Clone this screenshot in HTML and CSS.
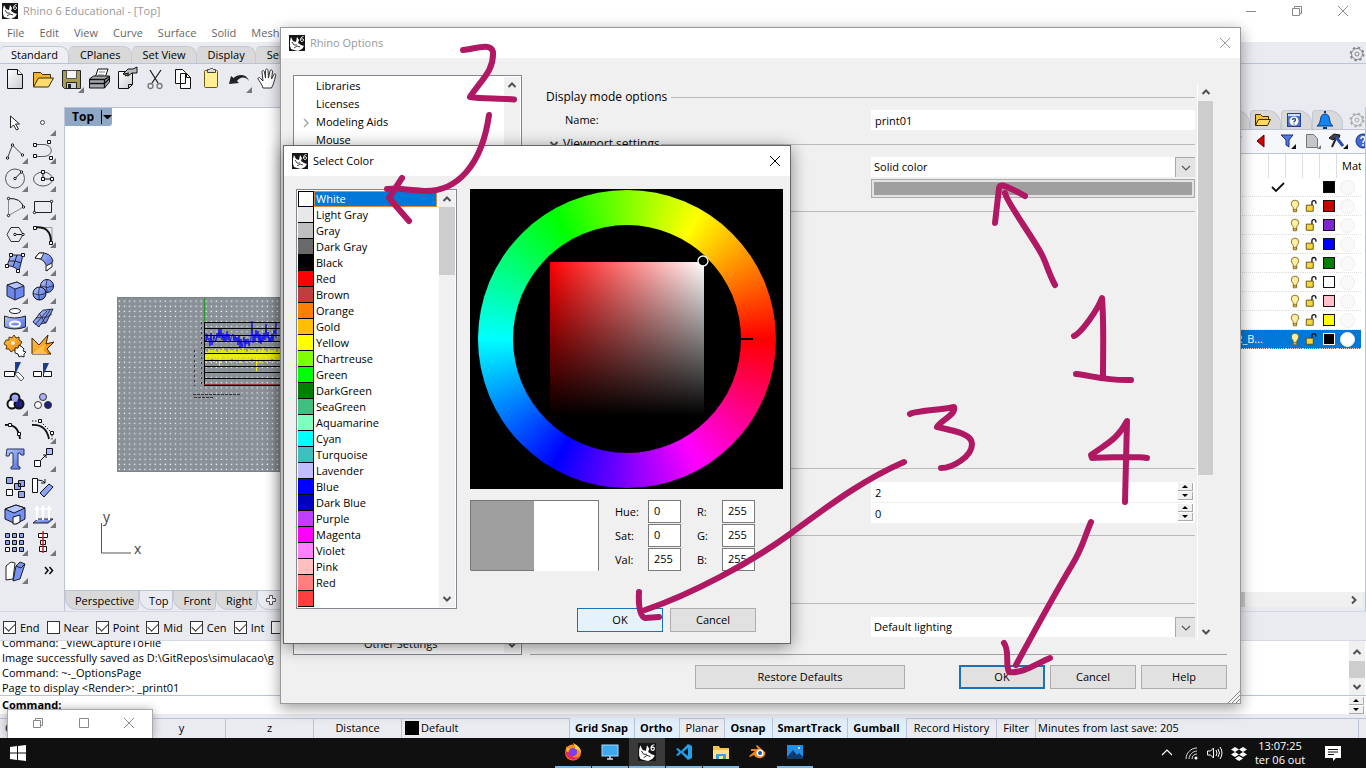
FILE: index.html
```html
<!DOCTYPE html>
<html lang="en">
<head>
<meta charset="utf-8">
<title>Rhino 6 Educational - [Top]</title>
<link rel="stylesheet" href="styles.css">
</head>
<body>
<svg class="defs" aria-hidden="true">
  <defs>
    <linearGradient id="bl" x1="0" y1="0" x2="1" y2="1"><stop offset="0" stop-color="#b9c8ff"/><stop offset="1" stop-color="#4a68d8"/></linearGradient>
    <linearGradient id="or" x1="0" y1="0" x2="1" y2="1"><stop offset="0" stop-color="#ffc64a"/><stop offset="1" stop-color="#ef8200"/></linearGradient>
    <linearGradient id="gy" x1="0" y1="0" x2="1" y2="1"><stop offset="0" stop-color="#fff"/><stop offset="1" stop-color="#c9cbd0"/></linearGradient>
    <pattern id="dots" x="55" y="193" width="5.1" height="5.1" patternUnits="userSpaceOnUse"><rect width="5.1" height="5.1" fill="#8f959c"/><path d="M2.500 0V5.100M0 2.500H5.100" stroke="#80868d" stroke-width=".6"/><rect x="4" y="4" width="1.100" height="1.100" fill="#fff"/></pattern>
    <path id="yz" d="M0 0l1 12 1-10 1 8 1-11 1 13 1-12 1 9 1-9 1 12 1-13 1 11 1-8 1 8 1-11 1 14 1-13 1 10 1-12 1 12 1-10" fill="none" stroke="#f5f500"/>
    <symbol id="rhino" viewBox="0 0 16 16"><rect width="16" height="16" fill="#161616"/><path d="M1 6l1-4 2 4 3 1 1-5 2 3-1 3 3 2 3 1-2 3-4 2-4-1-3-1-1-3z" fill="#fff"/><path d="M3 7l2 3 3 0M5 13l3-2 3 1" stroke="#161616" fill="none" stroke-width=".8"/><path d="M14.500 1.500c-2 .2-3 1.500-3 3.200 0 2.500 3 2.200 3 .3 0-1.700-2.200-1.700-2.800-.3" fill="none" stroke="#fff"/></symbol>
    <symbol id="tri" viewBox="0 0 28 28"><path d="M27 22v6h-6z" fill="#777"/></symbol>
    <symbol id="up" viewBox="0 0 16 16"><path d="M4.500 10L8 6.500l3.500 3.500" fill="none" stroke="#505050" stroke-width="2"/></symbol>
    <symbol id="down" viewBox="0 0 16 16"><path d="M4.500 6L8 9.500 11.500 6" fill="none" stroke="#505050" stroke-width="2"/></symbol>
    <symbol id="thin" viewBox="0 0 16 16"><path d="M4 6l4 4 4-4" fill="none" stroke="#555" stroke-width="1.200"/></symbol>
    <symbol id="close" viewBox="0 0 12 12"><path d="M1 1l10 10M11 1L1 11" fill="none" stroke="currentColor"/></symbol>
    <symbol id="restore" viewBox="0 0 12 12"><path d="M1.500 3.500h7v7h-7zM3.500 3.500v-2h7v7h-2" fill="none" stroke="currentColor"/></symbol>
    <symbol id="gear" viewBox="0 0 16 16"><circle cx="8" cy="8" r="5.500" fill="none" stroke="currentColor" stroke-width="1"/><circle cx="8" cy="8" r="6.500" fill="none" stroke="currentColor" stroke-width="1.800" stroke-dasharray="2.500 2.600"/><circle cx="8" cy="8" r="2" fill="none" stroke="currentColor"/></symbol>
    <symbol id="bulb" viewBox="0 0 12 16"><path d="M4 11C4 9 1.500 8 1.500 5.500a4.500 4.500 0 0 1 9 0C10.500 8 8 9 8 11v3H4z" fill="#fff0a0" stroke="#7a5a10"/><path d="M4 12h4v3H4z" fill="#d4b050" stroke="#7a5a10" stroke-width=".8"/></symbol>
    <symbol id="lock" viewBox="0 0 14 16"><path d="M7.500 7V4a2 2 0 0 1 4.500 0v1.500" fill="none" stroke="#111" stroke-width="1.500"/><path d="M1 7h8v7H1z" fill="#f5d53d" stroke="#5a4508"/></symbol>
    <symbol id="folder" viewBox="0 0 22 18"><path d="M3.500 14.500v-11h5l2 2h6v3" fill="#f5c03a" stroke="#3c2c00"/><path d="M3.500 14.500l3-6h12l-3 6z" fill="#ffd864" stroke="#3c2c00"/></symbol>
  </defs>
</svg>

<div class="app">
  <header class="titlebar">
    <svg class="i16"><use href="#rhino"/></svg>
    <h1>Rhino 6 Educational - [Top]</h1>
    <div class="winctl">
      <button aria-label="Minimize"><svg class="i12" viewBox="0 0 12 12"><path d="M1 6.500h10" stroke="currentColor"/></svg></button>
      <button aria-label="Restore"><svg class="i12"><use href="#restore"/></svg></button>
      <button aria-label="Close"><svg class="i12"><use href="#close"/></svg></button>
    </div>
  </header>
  <nav class="menu"><button>File</button><button>Edit</button><button>View</button><button>Curve</button><button>Surface</button><button>Solid</button><button>Mesh</button></nav>
  <div class="tabbar">
    <div class="tabs"><button class="tab on">Standard</button><button class="tab">CPlanes</button><button class="tab">Set View</button><button class="tab">Display</button><button class="tab">Select</button></div>
    <svg class="i16 gear"><use href="#gear"/></svg>
  </div>
  <div class="toolbar">
    <button aria-label="New"><svg viewBox="0 0 28 28"><path d="M6.500 4.500h10l5 5v14h-15z" fill="url(#gy)" stroke="#111"/><path d="M16.500 4.500v5h5" fill="#fff" stroke="#111"/></svg></button>
    <button aria-label="Open"><svg viewBox="0 0 28 28"><path d="M4.500 21.500v-14h7l2 2h8v4" fill="#f5b52a" stroke="#3c2c00"/><path d="M4.500 22l5-9h15l-5 9z" fill="#ffdc70" stroke="#3c2c00"/></svg></button>
    <button aria-label="Save"><svg viewBox="0 0 28 28"><path d="M5.500 5.500h18v18h-16l-2-2z" fill="#a99c52" stroke="#222"/><path d="M9.500 5.500h10v8h-10z" fill="#f2f4f6" stroke="#555"/><path d="M9.500 17.500h10v6h-10z" fill="#ccd2d6" stroke="#222"/><path d="M11 19h3v4h-3z" fill="#222"/><use href="#tri"/></svg></button>
    <button aria-label="Print"><svg viewBox="0 0 28 28"><path d="M10 13l3-9h10l-3 9z" fill="#fff" stroke="#111"/><path d="M14 7h6M13 10h6" stroke="#777"/><path d="M4.500 14l4-3h16v6l-5 6h-15z" fill="#a5a9ae" stroke="#111"/><path d="M4.500 14.500h15l5-3M4.500 18.500h15l5-5M19.500 14.500V23" fill="none" stroke="#111" stroke-width="1.300"/></svg></button>
    <button aria-label="Properties"><svg viewBox="0 0 28 28"><path d="M5.500 6.500h14v13l-4 4h-10z" fill="url(#gy)" stroke="#111"/><path d="M15.500 23.500v-4h4" fill="none" stroke="#111"/><path d="M10 9l5-5h5l4-2v6h-5l-4 3z" fill="#bbb" stroke="#111"/><path d="M11 9l5-1M12 11l4-2" stroke="#111"/></svg></button>
    <button aria-label="Cut"><svg viewBox="0 0 28 28"><path d="M9 5l8 13M20 5l-9 13" stroke="#222" stroke-width="1.300"/><circle cx="9.500" cy="21" r="2.500" fill="none" stroke="#777" stroke-width="1.300"/><circle cx="18.500" cy="21" r="2.500" fill="none" stroke="#777" stroke-width="1.300"/></svg></button>
    <button aria-label="Copy"><svg viewBox="0 0 28 28"><path d="M6.500 4.500h7l3 3v11h-10zM11.500 8.500h6l4 4v11h-10z" fill="#fff" stroke="#111"/><path d="M17.500 8.500v4h4" fill="none" stroke="#111"/></svg></button>
    <button aria-label="Paste"><svg viewBox="0 0 28 28"><rect x="7.500" y="5.500" width="13" height="17" rx="1" fill="#ffef94" stroke="#70560e"/><path d="M10.500 7.500v-3h2l1-1h2l1 1h2v3z" fill="#ddd" stroke="#444"/></svg></button>
    <button aria-label="Undo"><svg viewBox="0 0 28 28"><path d="M4 19l2-8 2.500 2C14 8 22 9 24 16c-4-5-9-4-12 0l2 2z" fill="#222"/><use href="#tri"/></svg></button>
    <button aria-label="Pan"><svg viewBox="0 0 28 28"><path d="M10 23c-1-4-4-7-5-9 0-2 2-2 3 0l2 2-1-9c0-2 2-2 2.500 0l1 6V5.500c0-2 2.500-2 2.500 0L15.500 13 17 6c.5-2 3-1 2.500 1l-1 7 2-4c1-2 3-1 2 1-1 5-2 8-4 12z" fill="#fff" stroke="#333"/></svg></button>
  </div>

  <main class="work">
    <div class="tools">
      <button aria-label="Select"><svg viewBox="0 0 28 28"><path d="M9.500 8v12l3-3 3 5 2-1-3-5h4z" fill="#fff" stroke="#222"/></svg></button>
      <button aria-label="Point"><svg viewBox="0 0 28 28"><circle cx="13.500" cy="14.500" r="2" fill="#fff" stroke="#444"/><use href="#tri"/></svg></button>
      <button aria-label="Polyline"><svg viewBox="0 0 28 28"><path d="M6.500 22l5-13 10 10" fill="none" stroke="#444"/><g fill="#fff" stroke="#111"><circle cx="6.500" cy="22" r="1.200"/><circle cx="11.500" cy="9" r="1.200"/><circle cx="21.500" cy="19" r="1.200"/></g><use href="#tri"/></svg></button>
      <button aria-label="Curve"><svg viewBox="0 0 28 28"><path d="M6 8.500h8c11 0 11 12 0 12H6" fill="none" stroke="#555"/><path d="M4.500 7.500h3v3h-3zM18.500 4.500h3v3h-3zM4.500 18.500h3v3h-3zM20.500 20.500h3v3h-3z" fill="#fff" stroke="#111"/><use href="#tri"/></svg></button>
      <button aria-label="Circle"><svg viewBox="0 0 28 28"><circle cx="14" cy="14.500" r="9.500" fill="none" stroke="#555"/><path d="M14 14.500L20.500 8" stroke="#111"/><g fill="#fff" stroke="#111"><circle cx="14" cy="14.500" r="1.200"/><circle cx="20.500" cy="8" r="1.200"/></g><use href="#tri"/></svg></button>
      <button aria-label="Ellipse"><svg viewBox="0 0 28 28"><ellipse cx="14" cy="15" rx="9.500" ry="7" fill="none" stroke="#555"/><path d="M14 8v7h9" fill="none" stroke="#111"/><path d="M12.500 6.500h3v3h-3zM12.500 13.500h3v3h-3zM21.500 13.500h3v3h-3z" fill="#fff" stroke="#111"/><use href="#tri"/></svg></button>
      <button aria-label="Arc"><svg viewBox="0 0 28 28"><path d="M7.500 6.500v17L22.500 15" fill="none" stroke="#888"/><path d="M7.500 6.500Q20 6 22.500 15" fill="none" stroke="#111"/><g fill="#fff" stroke="#111"><circle cx="7.500" cy="6.500" r="1.200"/><circle cx="7.500" cy="23.500" r="1.200"/><circle cx="22.500" cy="15" r="1.200"/></g><use href="#tri"/></svg></button>
      <button aria-label="Rectangle"><svg viewBox="0 0 28 28"><path d="M5.500 9.500h17v11h-17z" fill="none" stroke="#222"/><g fill="#fff" stroke="#111"><circle cx="22.500" cy="9.500" r="1.200"/><circle cx="5.500" cy="20.500" r="1.200"/></g><use href="#tri"/></svg></button>
      <button aria-label="Polygon"><svg viewBox="0 0 28 28"><path d="M6 14.500l4-7h8l4 7-4 7h-8z" fill="none" stroke="#333"/><path d="M14 14.500h8" stroke="#111"/><g fill="#fff" stroke="#111"><circle cx="14" cy="14.500" r="1.200"/><circle cx="22" cy="14.500" r="1.200"/></g><use href="#tri"/></svg></button>
      <button aria-label="Fillet"><svg viewBox="0 0 28 28"><path d="M8 7.500h15v13" fill="none" stroke="#999"/><path d="M6 7.500Q22 6 22 22" fill="none" stroke="#111" stroke-width="2"/><path d="M4.500 6.500h3v3h-3zM20.500 21.500h3v3h-3z" fill="#fff" stroke="#111"/><use href="#tri"/></svg></button>
      <button aria-label="Surface"><svg viewBox="0 0 28 28"><path d="M10 7h12l-4 16q-6-6-12-5z" fill="url(#bl)" stroke="#223"/><path d="M16 7l-4 12M8 13q6-1 12 2" fill="none" stroke="#223"/><path d="M8.500 5.500h3v3h-3zM20.500 5.500h3v3h-3zM4.500 16.500h3v3h-3zM15.500 21.500h3v3h-3z" fill="#fff" stroke="#111"/><use href="#tri"/></svg></button>
      <button aria-label="Sweep"><svg viewBox="0 0 28 28"><path d="M6 10l4-5q12-1 14 8l-6 10q0-13-12-13z" fill="url(#bl)" stroke="#222"/><path d="M6 10l4-5h5l-3 6zM17 18l6-3v4l-6 4z" fill="#fff" stroke="#222"/><use href="#tri"/></svg></button>
      <button aria-label="Box"><svg viewBox="0 0 28 28"><path d="M6 9l10-3 7 4v10l-9 4-8-4z" fill="#6b87ec" stroke="#223"/><path d="M6 9l8 4 9-3-7-4z" fill="#b5c4ff" stroke="#223"/><path d="M14 13v11" stroke="#223"/><use href="#tri"/></svg></button>
      <button aria-label="Spheres"><svg viewBox="0 0 28 28"><g fill="url(#bl)" stroke="#112"><circle cx="18" cy="10" r="6.500"/><circle cx="10.500" cy="17.500" r="6.500"/></g><path d="M12 10q6 3 12 0M18 4q-2 6 0 12M4 17.500q6 3 13 0M10.500 11q-2 6 0 13" fill="none" stroke="#112" stroke-width=".7"/><use href="#tri"/></svg></button>
      <button aria-label="Project"><svg viewBox="0 0 28 28"><ellipse cx="14" cy="7" rx="5.500" ry="2.500" fill="#fff" stroke="#222"/><path d="M3.500 12q10 4 21 0v11q-11 4-21 0z" fill="url(#bl)" stroke="#222"/><ellipse cx="14" cy="20" rx="5" ry="2.500" fill="none" stroke="#fff" stroke-width="2"/><use href="#tri"/></svg></button>
      <button aria-label="Mesh"><svg viewBox="0 0 28 28"><path d="M4 18l7-9q4-4 5-3l8-1-7 14q-6 0-7 4z" fill="url(#bl)" stroke="#223"/><path d="M7 14l11-1 5-3M6 21l12-14M12 20l9-14M10 9l3 5 3 5" fill="none" stroke="#223" stroke-width=".8"/><use href="#tri"/></svg></button>
      <button aria-label="Join"><svg viewBox="0 0 28 28"><path d="M5 8h3V5l3 1 2-3 2 3 3-1v3l3 2-2 3 1 3h-3l-1 3-3-1-3 2-2-3H5l1-3-3-2z" fill="url(#or)" stroke="#5c3500"/><circle cx="12" cy="11" r="2" fill="#e8eaef"/><path d="M14 16l3 0 1-3 3 2 2 2-1 2 3 1-2 2 0 3-3-1-2 1-1-3-3-1z" fill="#fff" stroke="#222"/></svg></button>
      <button aria-label="Explode"><svg viewBox="0 0 28 28"><path d="M3 6l7 7 9-10-2 9 8-2-7 7 4 5H3z" fill="url(#or)" stroke="#3c2200"/><path d="M3 22l7-6 7-4-3 6 5 4z" fill="#ffc04a"/></svg></button>
      <button aria-label="Trim"><svg viewBox="0 0 28 28"><path d="M3.500 11.500h10v5h-10z" fill="#fff" stroke="#111"/><path d="M14 14l3-2 6 6-3 3z" fill="#fff" stroke="#555"/><path d="M14 2h6l-6 13z" fill="#1f3d8f"/></svg></button>
      <button aria-label="Split"><svg viewBox="0 0 28 28"><path d="M4.500 11.500h8v5h-8zM14.500 11.500h8v5h-8z" fill="#fff" stroke="#111"/><path d="M14 3h6l-6 13z" fill="#1f3d8f"/></svg></button>
      <button aria-label="Group"><svg viewBox="0 0 28 28"><g stroke="#111" stroke-width="2"><circle cx="14" cy="10" r="4.500" fill="#aab0f5"/><circle cx="11" cy="16" r="4.500" fill="#fff"/><circle cx="18" cy="16" r="4.500" fill="#202080"/></g><circle cx="14" cy="11" r="3" fill="#9aa3ee"/><use href="#tri"/></svg></button>
      <button aria-label="Ungroup"><svg viewBox="0 0 28 28"><g stroke="#333"><circle cx="14" cy="9" r="3.500" fill="#aab0f5"/><circle cx="9" cy="17" r="3.500" fill="#fff"/><circle cx="19" cy="17" r="3.500" fill="#202080"/></g></svg></button>
      <button aria-label="Edit curve"><svg viewBox="0 0 28 28"><path d="M4 9q13-2 15 14" fill="none" stroke="#111" stroke-width="1.800"/><path d="M7.500 7.500h3v3h-3zM16.500 16.500h3v3h-3z" fill="#fff" stroke="#111"/></svg></button>
      <button aria-label="Control points"><svg viewBox="0 0 28 28"><path d="M3 9q14-1 17 14" fill="none" stroke="#111" stroke-width="1.800"/><path d="M3 5h8l12 12v8" fill="none" stroke="#111" stroke-dasharray="1.500 1.500"/><path d="M9.500 3.500h3v3h-3zM21.500 15.500h3v3h-3z" fill="#fff" stroke="#111"/><use href="#tri"/></svg></button>
      <button aria-label="Annotate"><svg viewBox="0 0 28 28"><path d="M6 5h17v6h-3l-1-2h-2v13l2 1v2h-9v-2l2-1V9H9l-1 3H5z" fill="url(#bl)" stroke="#26355f"/></svg></button>
      <button aria-label="Move"><svg viewBox="0 0 28 28"><path d="M17.500 4.500h6v6h-6z" fill="#aebcff" stroke="#111"/><path d="M5.500 16.500h6v6h-6z" fill="#fff" stroke="#111"/><path d="M12 16l5-5m-3 0h3v3" fill="none" stroke="#111"/><use href="#tri"/></svg></button>
      <button aria-label="Array"><svg viewBox="0 0 28 28"><path d="M5.500 5.500h6v6h-6zM17.500 8.500h6v6h-6zM13.500 11.500h6v6h-6zM17.500 19.500h6v6h-6z" fill="#8ea3f8" stroke="#111"/><path d="M5.500 17.500h6v6h-6z" fill="#fff" stroke="#111"/></svg></button>
      <button aria-label="Rotate"><svg viewBox="0 0 28 28"><path d="M3.500 6.500h5v14h-5z" fill="#fff" stroke="#111"/><path d="M11 21l9-9 4 3-9 10z" fill="#8ea3f8" stroke="#111"/><path d="M9 8q5 0 7 3m0-4v4h-4" fill="none" stroke="#111"/></svg></button>
      <button aria-label="Cage"><svg viewBox="0 0 28 28"><path d="M4 9l11-4 9 3v11l-9 5-11-5z" fill="#7793f2" stroke="#112"/><path d="M4 9l9 4 11-5-9-3z" fill="#b9c7ff" stroke="#112"/><path d="M12 24v-7l7-2v7l-4 2z" fill="#fff" stroke="#112"/><use href="#tri"/></svg></button>
      <button aria-label="Extrude"><svg viewBox="0 0 28 28"><path d="M4 23l5-4h15l-5 4z" fill="url(#bl)" stroke="#223"/><path d="M8 20V9M14 20V9M20 20V9" stroke="#fff" stroke-width="2"/><path d="M5 10l3-5 3 5zM11 10l3-5 3 5zM17 10l3-5 3 5z" fill="#fff"/><use href="#tri"/></svg></button>
      <button aria-label="Grid array"><svg viewBox="0 0 28 28"><path d="M4.500 5.500h4v4h-4zM11.500 5.500h4v4h-4zM18.500 5.500h4v4h-4zM4.500 12.500h4v4h-4zM11.500 12.500h4v4h-4zM18.500 12.500h4v4h-4zM11.500 19.500h4v4h-4zM18.500 19.500h4v4h-4z" fill="#8ea3f8" stroke="#111"/><path d="M4.500 19.500h4v4h-4z" fill="#fff" stroke="#111"/><use href="#tri"/></svg></button>
      <button aria-label="Align"><svg viewBox="0 0 28 28"><path d="M9.500 5.500h9v4h-9zM11.500 12.500h5v4h-5zM10.500 18.500h7v5h-7z" fill="#fff" stroke="#111"/><path d="M14 3v22" stroke="#c22" stroke-width="1.500"/><use href="#tri"/></svg></button>
      <button aria-label="Bend"><svg viewBox="0 0 28 28"><path d="M5 10l5-4 4 1-2 16-7 1z" fill="#fff" stroke="#222"/><path d="M15 10l4-4 5 2-5 15-7 2z" fill="#7793f2" stroke="#222"/><path d="M15 10l5 2 4-4" fill="none" stroke="#222"/><use href="#tri"/></svg></button>
      <button aria-label="More"><svg viewBox="0 0 28 28"><path d="M16 11l3 3.500-3 3.500M20.500 11l3 3.500-3 3.500" fill="none" stroke="#111" stroke-width="1.600"/></svg></button>
    </div>

    <section class="view">
      <div class="canvas">
        <div class="vtitle"><b>Top</b><button aria-label="Viewport menu"></button></div>
        <svg class="model" viewBox="0 2 400 466">
          <rect x="52.500" y="173.500" width="347" height="174" fill="url(#dots)" stroke="#7d838a"/>
          <path d="M139.500 174v24" stroke="#2a9a2a" stroke-width="1.500"/>
          <path d="M141 209v8l1-7 1 6 1-2 1 8 1-13 1 12 1-4 1-5 2 6 1-9 1 5 1-9 1 9 1-9 1 11 1-7 1 9 1-8 1 7 1-10 1 9 1-6 1 8 1-4 2-4 1 7 1-5 1 5 1-4 1 8 1-10 1 12 1-8 1 9 1-5 1-6 1 10 1-8 1 5 1-5 1 7 1-4 1-4 1-17 1 22 1-9 1 7 1-11 1 8 1-7 1 12 1-9 1 10 1-8 1 5 1-8 1 7 1-16 1 14 1-6 1 10 1-5 1 5 1-8 1 8 1-12 1 4 1-11v15" fill="none" stroke="#1515f0"/>
          <use href="#yz" x="140" y="226"/><use href="#yz" x="160" y="226"/><use href="#yz" x="180" y="226"/><use href="#yz" x="200" y="226"/>
          <path d="M191.500 230v17M154.500 230v12" stroke="#f5f500"/>
          <path d="M139 198.500h260M139 204.500h260M139 211.500h260M139 217.500h260M139 223.500h260M139 229.500h260M139 236.500h260M139 242.500h260M139 248.500h260M139 254.500h260M139.500 198v64" stroke="#000" fill="none"/>
          <path d="M139 260.500h260" stroke="#933"/><path d="M139 261.500h260" stroke="#000"/>
          <path d="M136.500 198v64M129.500 226v36" stroke="#333" stroke-dasharray="2 3"/><path d="M128 270.500h48M129 273.500h20" stroke="#333" stroke-dasharray="3 1"/>
          <path d="M36.500 399v30H66" fill="none" stroke="#555"/>
          <text x="38" y="398">y</text><text x="69" y="430">x</text>
        </svg>
      </div>
      <div class="vtabs"><button>Perspective</button><button class="on">Top</button><button>Front</button><button>Right</button><button class="on plus" aria-label="New viewport"><svg class="i12" viewBox="0 0 12 12"><path d="M4.500 1.500h3v3h3v3h-3v3h-3v-3h-3v-3h3z" fill="#fff" stroke="#555"/></svg></button></div>
    </section>

    <aside class="panel">
      <div class="ptabs">
        <button aria-label="Layers"></button>
        <button aria-label="Libraries"><svg viewBox="0 0 22 18"><use href="#folder"/></svg></button>
        <button aria-label="Help"><svg viewBox="0 0 22 18"><rect x="4.500" y="2.500" width="13" height="13" fill="#4f72cf" stroke="#274087"/><path d="M5 4h12" stroke="#cfe0ff" stroke-width="2"/><circle cx="11" cy="10" r="4.500" fill="#fff"/><path d="M9.500 9c0-2 3-2 3 0 0 1-1.500 1-1.500 2.500M11 12.500v1" fill="none" stroke="#274087" stroke-width="1.300"/></svg></button>
        <button aria-label="Notifications"><svg viewBox="0 0 22 18"><path d="M3 15c3-2 3-5 4-9 1-4 7-4 8 0 1 4 1 7 4 9z" fill="#1583f0" stroke="#073b80"/><path d="M9 16h4v2H9zM10 0h2v2h-2z" fill="#073b80"/></svg></button>
        <svg class="i16 pgear"><use href="#gear"/></svg>
      </div>
      <div class="pbar">
        <svg viewBox="0 0 22 22"><path d="M2 6h14l-5 9z" fill="#999"/></svg>
        <svg viewBox="0 0 22 22"><path d="M6 11l7-6v12z" fill="#d40000" stroke="#500"/></svg>
        <svg viewBox="0 0 22 22"><path d="M5 5h12l-4 5v7l-3-2v-5z" fill="#5578e0" stroke="#1c3174"/><path d="M20 14v5h-5z" fill="#111"/></svg>
        <svg viewBox="0 0 22 22"><path d="M5.500 4.500h7l4 4v9h-11z" fill="#c4c6ca" stroke="#777"/><path d="M20 15v4h-4z" fill="#777"/></svg>
        <svg viewBox="0 0 22 22"><path d="M3 8l5-4 6 1-1 3-3-1-3 3z" fill="#444" stroke="#111"/><path d="M10 8l-4 9" stroke="#222" stroke-width="2"/><path d="M10 7l7 9" stroke="#2b4db5" stroke-width="3"/><path d="M22 14v5h-5z" fill="#111"/></svg>
        <svg viewBox="0 0 22 22"><circle cx="12" cy="11" r="7" fill="#3f68d8" stroke="#1c3174"/><path d="M10 9c0-3 4-3 4 0 0 2-2 1-2 4M12 14v2" fill="none" stroke="#fff" stroke-width="1.500"/></svg>
      </div>
      <div class="layers">
        <table>
          <thead><tr><th class="nm"></th><th></th><th></th><th></th><th></th><th class="mat">Mat</th></tr></thead>
          <tbody>
            <tr><td class="nm"></td><td><svg class="ck" viewBox="0 0 14 12"><path d="M1 6l4 4 8-8" fill="none" stroke="#111" stroke-width="1.800"/></svg></td><td></td><td></td><td><i class="sw k"></i></td><td><i class="mt"></i></td></tr>
            <tr><td class="nm"></td><td></td><td><svg class="bu"><use href="#bulb"/></svg></td><td><svg class="lo"><use href="#lock"/></svg></td><td><i class="sw r"></i></td><td><i class="mt"></i></td></tr>
            <tr><td class="nm"></td><td></td><td><svg class="bu"><use href="#bulb"/></svg></td><td><svg class="lo"><use href="#lock"/></svg></td><td><i class="sw p"></i></td><td><i class="mt"></i></td></tr>
            <tr><td class="nm"></td><td></td><td><svg class="bu"><use href="#bulb"/></svg></td><td><svg class="lo"><use href="#lock"/></svg></td><td><i class="sw b"></i></td><td><i class="mt"></i></td></tr>
            <tr><td class="nm"></td><td></td><td><svg class="bu"><use href="#bulb"/></svg></td><td><svg class="lo"><use href="#lock"/></svg></td><td><i class="sw g"></i></td><td><i class="mt"></i></td></tr>
            <tr><td class="nm"></td><td></td><td><svg class="bu"><use href="#bulb"/></svg></td><td><svg class="lo"><use href="#lock"/></svg></td><td><i class="sw w"></i></td><td><i class="mt"></i></td></tr>
            <tr><td class="nm"></td><td></td><td><svg class="bu"><use href="#bulb"/></svg></td><td><svg class="lo"><use href="#lock"/></svg></td><td><i class="sw n"></i></td><td><i class="mt"></i></td></tr>
            <tr><td class="nm"></td><td></td><td><svg class="bu"><use href="#bulb"/></svg></td><td><svg class="lo"><use href="#lock"/></svg></td><td><i class="sw y"></i></td><td><i class="mt"></i></td></tr>
            <tr class="sel"><td class="nm">R_B...</td><td></td><td><svg class="bu"><use href="#bulb"/></svg></td><td><svg class="lo"><use href="#lock"/></svg></td><td><i class="sw k"></i></td><td><i class="mt"></i></td></tr>
          </tbody>
        </table>
      </div>
      <div class="hscroll"><i></i><svg class="i16" viewBox="0 0 16 16"><path d="M6 4.500L9.500 8 6 11.500" fill="none" stroke="#505050" stroke-width="2"/></svg></div>
    </aside>
  </main>

  <div class="osnap">
    <label><input type="checkbox" checked>End</label><label><input type="checkbox">Near</label><label><input type="checkbox" checked>Point</label><label><input type="checkbox" checked>Mid</label><label><input type="checkbox" checked>Cen</label><label><input type="checkbox" checked>Int</label><label><input type="checkbox">Perp</label>
  </div>
  <div class="history">
    <div class="lines"><p>Command: _ViewCaptureToFile</p><p>Image successfully saved as D:\GitRepos\simulacao\g</p><p>Command: ~-_OptionsPage</p><p>Page to display &lt;Render&gt;: _print01</p></div>
    <div class="hbar"><svg class="i16"><use href="#up"/></svg><i></i><svg class="i16"><use href="#down"/></svg></div>
  </div>
  <div class="prompt"><label for="cmd">Command:</label><input id="cmd" type="text"><span class="spin"><button aria-label="Previous"></button><button aria-label="Next"></button></span></div>
  <div class="status">
    <span class="c1">CPlane</span><span class="c2">y</span><span class="c2">z</span><span class="c2">Distance</span><span class="c3"><i></i>Default</span>
    <button class="on">Grid Snap</button><button class="on">Ortho</button><button>Planar</button><button class="on">Osnap</button><button class="on">SmartTrack</button><button class="on">Gumball</button><button class="wide">Record History</button><button>Filter</button><span class="c4">Minutes from last save: 205</span>
  </div>
  <footer class="taskbar">
    <button class="start" aria-label="Start"><svg class="i16" viewBox="0 0 16 16"><path d="M0 2l7-1v6.500H0zM8 1l8-1v7.500H8zM0 8.500h7V15l-7-1zM8 8.500h8V16l-8-1z" fill="#fff"/></svg></button>
    <div class="apps">
      <button aria-label="Firefox"><svg viewBox="0 0 18 18"><circle cx="9" cy="9.500" r="8" fill="#ff8a1c"/><path d="M1 8c1 9 10 12 15 5-4 3-9 1-8-3z" fill="#e8265e"/><circle cx="9" cy="9" r="4" fill="#7542e5"/><path d="M9 0c4 2 8 5 8 10-2-4-4-4-6-4C12 3 10 2 9 0z" fill="#ffd93b"/><path d="M2 3c1 2 3 2 4 3-2 1-2 3-3 3z" fill="#ffb52e"/></svg></button>
      <button aria-label="Remote"><svg viewBox="0 0 18 18"><rect x="1" y="2" width="16" height="11" fill="#3da9ee" stroke="#a6d9ff"/><path d="M6 16h6M9 13v3" stroke="#cde" stroke-width="1.500"/></svg></button>
      <button class="on" aria-label="Rhino"><svg><use href="#rhino"/></svg></button>
      <button aria-label="Code"><svg viewBox="0 0 18 18"><path d="M13 1l4 2v12l-4 2-7-7-3 3-2-1 3-3-3-3 2-1 3 3z" fill="#23a0ea"/><path d="M13 5v8L8 9z" fill="#101010"/></svg></button>
      <button aria-label="Explorer"><svg viewBox="0 0 18 18"><path d="M1 3h6l1 2h9v11H1z" fill="#f5c24a"/><path d="M1 7h16v9H1z" fill="#ffdf87"/><path d="M4 16v-5h10v5h-3v-3H7v3z" fill="#36a2e4"/></svg></button>
      <button class="idle" aria-label="Blender"><svg viewBox="0 0 18 18"><path d="M8 2l8 7c2 6-8 9-11 3L1 14l-1-1 6-5H2V6h7L7 3z" fill="#f08418"/><circle cx="11" cy="10" r="3.500" fill="#fff"/><circle cx="11" cy="10" r="2" fill="#17529c"/></svg></button>
      <button aria-label="Photos"><svg viewBox="0 0 18 18"><rect x="1" y="2" width="16" height="14" fill="#1e8ee8"/><path d="M1 14l6-7 4 5 2-2 4 4v2H1z" fill="#0c3b6e"/><circle cx="13" cy="5" r="1" fill="#fff"/></svg></button>
    </div>
    <div class="tray">
      <svg viewBox="0 0 18 18"><path d="M4 11l5-5 5 5" fill="none" stroke="#fff" stroke-width="1.200"/></svg>
      <svg viewBox="0 0 18 18"><path d="M4 15C4 9 9 4 15 4M7 15c0-4 4-8 8-8M10 15c0-3 2-5 5-5" fill="none" stroke="#ddd"/><circle cx="14" cy="14" r="1.500" fill="#fff"/></svg>
      <svg viewBox="0 0 18 18"><path d="M1.500 7v4h3l3 3V4l-3 3zM10 6q2 3 0 6M12 5q3 4 0 8M14 3q4 6 0 12" fill="none" stroke="#fff"/></svg>
      <svg viewBox="0 0 18 18"><path d="M5 3l4 2.500L5 8 1 5.500zM13 3l4 2.500L13 8 9 5.500zM5 8l4 2.500L5 13l-4-2.500zM13 8l4 2.500-4 2.500-4-2.500zM9 12l4 2.500L9 17l-4-2.500z" fill="#fff"/></svg>
      <div class="clock">13:07:25<br>ter 06 out</div>
      <svg class="note" viewBox="0 0 18 18"><path d="M1 2h16v12h-5l-3 3v-3H1z" fill="#fff"/><path d="M4 5.500h10M4 8h10M4 10.500h6" stroke="#101010"/></svg>
    </div>
  </footer>
</div>

<div class="mini"><svg class="i12"><use href="#restore"/></svg><svg class="i12" viewBox="0 0 12 12"><path d="M1.500 1.500h9v9h-9z" fill="none" stroke="currentColor"/></svg><svg class="i12"><use href="#close"/></svg></div>

<section class="win options">
  <header class="wtitle dim"><svg class="i16"><use href="#rhino"/></svg><h2>Rhino Options</h2><button aria-label="Close"><svg class="i12"><use href="#close"/></svg></button></header>
  <div class="obody">
    <div class="tree">
      <ul><li>Libraries</li><li>Licenses</li><li class="exp"><svg class="i16" viewBox="0 0 16 16"><path d="M6 5l4 4-4 4" fill="none" stroke="#aaa" stroke-width="1.500"/></svg>Modeling Aids</li><li>Mouse</li><li class="last">Other Settings</li></ul>
      <div class="vbar"><svg class="i16"><use href="#up"/></svg><svg class="i16"><use href="#down"/></svg></div>
    </div>
    <div class="pane">
      <div class="form">
        <div class="sec big"><h3>Display mode options</h3></div>
        <div class="row name"><label for="nm">Name:</label><input id="nm" type="text" value="print01"></div>
        <div class="sec sub"><svg class="i16"><use href="#down"/></svg><h3>Viewport settings</h3></div>
        <div class="row"><span></span><div class="combo"><select aria-label="Background"><option>Solid color</option></select><span><svg class="i16"><use href="#thin"/></svg></span></div></div>
        <div class="row color"><span></span><button aria-label="Background color"></button></div>
        <hr class="h1">
        <hr class="h2">
        <div class="row spinrow"><span></span><div class="num"><input type="text" value="2" aria-label="Isocurves"><span class="spin"><button aria-label="Up"></button><button aria-label="Down"></button></span></div></div>
        <div class="row spinrow"><span></span><div class="num"><input type="text" value="0" aria-label="Edges"><span class="spin"><button aria-label="Up"></button><button aria-label="Down"></button></span></div></div>
        <hr class="h3">
        <hr class="h4">
        <div class="row"><span></span><div class="combo"><select aria-label="Lighting"><option>Default lighting</option></select><span><svg class="i16"><use href="#thin"/></svg></span></div></div>
      </div>
      <div class="vbar wide"><svg class="i16"><use href="#up"/></svg><i></i><svg class="i16"><use href="#down"/></svg></div>
    </div>
  </div>
  <footer class="ofoot"><button class="btn restore">Restore Defaults</button><button class="btn def">OK</button><button class="btn">Cancel</button><button class="btn">Help</button></footer>
  <svg class="grip" viewBox="0 0 12 12"><path d="M0 12L12 0M4 12l8-8M8 12l4-4" stroke="#888"/></svg>
</section>

<section class="win picker">
  <header class="wtitle"><svg class="i16"><use href="#rhino"/></svg><h2>Select Color</h2><button aria-label="Close"><svg class="i12"><use href="#close"/></svg></button></header>
  <div class="pbody">
    <div class="list">
      <ul role="listbox" aria-label="Colors">
        <li role="option" aria-selected="true"><i style="background:#fff"></i><span>White</span></li>
        <li role="option"><i style="background:#e8e8e8"></i><span>Light Gray</span></li>
        <li role="option"><i style="background:#bebebe"></i><span>Gray</span></li>
        <li role="option"><i style="background:#696969"></i><span>Dark Gray</span></li>
        <li role="option"><i style="background:#000"></i><span>Black</span></li>
        <li role="option"><i style="background:#f00"></i><span>Red</span></li>
        <li role="option"><i style="background:#bf3f3f"></i><span>Brown</span></li>
        <li role="option"><i style="background:#ff7f00"></i><span>Orange</span></li>
        <li role="option"><i style="background:#ffbf00"></i><span>Gold</span></li>
        <li role="option"><i style="background:#ff0"></i><span>Yellow</span></li>
        <li role="option"><i style="background:#7fff00"></i><span>Chartreuse</span></li>
        <li role="option"><i style="background:#0f0"></i><span>Green</span></li>
        <li role="option"><i style="background:#007f00"></i><span>DarkGreen</span></li>
        <li role="option"><i style="background:#3fbf7f"></i><span>SeaGreen</span></li>
        <li role="option"><i style="background:#7fffbf"></i><span>Aquamarine</span></li>
        <li role="option"><i style="background:#0ff"></i><span>Cyan</span></li>
        <li role="option"><i style="background:#3fbfbf"></i><span>Turquoise</span></li>
        <li role="option"><i style="background:#bfbfff"></i><span>Lavender</span></li>
        <li role="option"><i style="background:#00f"></i><span>Blue</span></li>
        <li role="option"><i style="background:#0000bf"></i><span>Dark Blue</span></li>
        <li role="option"><i style="background:#bf3fff"></i><span>Purple</span></li>
        <li role="option"><i style="background:#f0f"></i><span>Magenta</span></li>
        <li role="option"><i style="background:#ff7fff"></i><span>Violet</span></li>
        <li role="option"><i style="background:#ffbfbf"></i><span>Pink</span></li>
        <li role="option"><i style="background:#ff7f7f"></i><span>Red</span></li>
        <li role="option"><i style="background:#ff3f3f"></i><span></span></li>
      </ul>
      <div class="vbar"><svg class="i16"><use href="#up"/></svg><i></i><svg class="i16"><use href="#down"/></svg></div>
    </div>
    <div class="right">
      <div class="wheelbox"><div class="wheel"><div class="hole"><div class="sv"></div></div></div>
        <svg class="marks" viewBox="0 0 313 300"><circle cx="233" cy="72" r="5" fill="#000" stroke="#fff" stroke-width="1.300"/><path d="M270 150h13" stroke="#000" stroke-width="2"/></svg>
      </div>
      <div class="vals">
        <div class="preview"><i></i></div>
        <div class="hsv"><label for="h">Hue:</label><input id="h" type="text" value="0"><label for="r">R:</label><input id="r" type="text" value="255"><label for="s">Sat:</label><input id="s" type="text" value="0"><label for="g">G:</label><input id="g" type="text" value="255"><label for="v">Val:</label><input id="v" type="text" value="255"><label for="b">B:</label><input id="b" type="text" value="255"></div>
      </div>
      <div class="pfoot"><button class="btn hot">OK</button><button class="btn">Cancel</button></div>
    </div>
  </div>
</section>

<svg class="ink" viewBox="0 0 1366 768" aria-label="Steps 1 to 4">
  <path d="M463 50C478 48 491 43 493 52C494 71 481 80 470 97C482 99 500 98 514 99.500"/>
  <path d="M489 115C482 165 457 192 424 191C410 190 398 188 387 189"/><path d="M402 178L389 198L409 221"/>
  <path d="M995 223L999 188C1000 182 1010 188 1025 196"/><path d="M1005 193C1007 203 1034 239 1042 255C1047 265 1049 274 1055 285"/>
  <path d="M1074 336C1081 333 1097 311 1102 298C1104 322 1103 350 1103 376"/><path d="M1076 374C1090 375 1105 381 1131 380"/>
  <path d="M910 414C915 411 940 410 954 407C957 414 940 421 937 427C955 431 972 434 972 444C972 457 952 468 941 468"/>
  <path d="M904 462C860 481 823 510 790 534C750 563 692 594 645 610"/><path d="M639 592C638 608 641 617 645 618L659 617"/>
  <path d="M1125 502L1127 421C1117 440 1106 444 1091 455L1092 458C1115 457 1135 456 1147 458"/>
  <path d="M1091 522C1084 538 1083 547 1072 565C1060 585 1035 630 1016 665"/><path d="M1004 643C1010 651 1005 665 1009 672C1022 674 1036 664 1050 658"/>
</svg>
</body>
</html>
```
FILE: styles.css
```css
* { box-sizing: border-box; }
body { margin: 0; height: 100vh; overflow: hidden; position: relative; font: 11px/16px "Open Sans", "Noto Sans", sans-serif; color: #000; background: #e9ebf0; }
h1, h2, h3, p, ul { margin: 0; padding: 0; font-weight: 400; font-size: inherit; }
li { list-style: none; }
button, input, select { font: inherit; color: inherit; border: 0; border-radius: 0; padding: 0; margin: 0; background: none; outline: 0; min-width: 0; }
svg { display: block; flex: none; }
.defs { position: absolute; width: 0; height: 0; }
.i16 { width: 16px; height: 16px; }
.i12 { width: 12px; height: 12px; }

.app { display: flex; flex-direction: column; height: 100vh; }
.titlebar { display: flex; align-items: center; height: 24px; padding: 0 0 2px 2px; background: #fff; color: #999; }
.titlebar h1 { margin-left: 5px; flex: 1; }
.winctl { display: flex; }
.winctl button { width: 46px; height: 20px; display: grid; place-items: center; color: #888; }
.menu { display: flex; gap: 15px; height: 18px; padding-left: 7px; background: #fff; color: #666; }
.tabbar { display: flex; align-items: flex-end; justify-content: space-between; height: 22px; border-bottom: 1px solid #bcc3d6; padding-right: 1px; }
.tabs { display: flex; height: 17px; }
.tab { height: 17px; padding: 0 10px 0 11px; background: #d9d9d9; border: 1px solid #c3c8d6; border-width: 1px 1px 0 0; border-radius: 5px 9px 0 0; line-height: 16px; }
.tab.on { background: #edeff3; }
.gear { color: #888; margin-bottom: 1px; }
.toolbar { display: flex; height: 43px; padding-left: 1px; }
.toolbar button { width: 28px; height: 30px; display: grid; place-items: center; }
.toolbar svg { width: 28px; height: 28px; }

.work { display: flex; flex: 1; min-height: 0; }
.tools { display: grid; grid-template-columns: 28px 28px; grid-auto-rows: 28px; align-content: start; width: 64px; padding: 1px 0 0 1px; }
.tools svg { width: 28px; height: 28px; }
.view { flex: 1; min-width: 0; display: flex; flex-direction: column; border-left: 1px solid #bcc3d6; }
.canvas { flex: 1; min-height: 0; background: #fff; border: solid #bcc3d6; border-width: 1px 0; }
.vtitle { display: flex; width: 47px; height: 18px; background: #8fa8c6; padding-left: 7px; font-size: 12px; border-bottom-right-radius: 3px; line-height: 18px; }
.vtitle b { flex: 1; }
.vtitle button { width: 11px; border-left: 1px solid #000; margin: 2px 0; }
.vtitle button::after { content: ""; display: block; border: 4px solid transparent; border-top-color: #000; margin: 4px 0 0 1px; }
.model { width: 400px; height: 466px; font: 14px "Open Sans"; fill: #444; }
.vtabs { display: flex; height: 20px; }
.vtabs button { padding: 0 4px 0 9px; background: #d9d9d9; border: 1px solid #c3c8d6; border-top: 0; border-radius: 0 0 4px 12px; height: 19px; line-height: 19px; }
.vtabs .on { background: #e9ebf0; }
.vtabs .plus { padding-left: 7px; display: grid; place-items: center; }

.panel { width: 240px; display: flex; flex-direction: column; border-right: 1px solid #bcc3d6; overflow: hidden; }
.ptabs { display: flex; justify-content: flex-end; height: 23px; padding-top: 3px; border-bottom: 1px solid #bcc3d6; }
.ptabs button { width: 31px; height: 19px; background: #d9d9d9; border: 1px solid #c3c8d6; border-bottom: 0; border-radius: 4px 14px 0 0; display: grid; place-items: center start; padding-left: 1px; }
.ptabs button svg { width: 22px; height: 18px; }
.pgear { color: #aaa; margin: 2px 0 0 6px; }
.pbar { display: flex; justify-content: flex-end; gap: 3px; height: 24px; margin-right: -8px; background: #f6f7fa; border-bottom: 1px solid #bcc3d6; }
.pbar svg { width: 22px; height: 22px; }
.layers { flex: 1; min-height: 0; overflow: hidden; background: #fff; padding-right: 4px; }
table { width: 100%; border-collapse: separate; border-spacing: 0; table-layout: fixed; }
th { width: 17px; height: 24px; padding: 0; border-right: 1px solid #ddd; font-weight: 400; text-align: left; }
th.nm { width: auto; }
th.mat { width: 24px; border: 0; padding-left: 5px; overflow: hidden; white-space: nowrap; }
td { height: 19px; padding: 0; border-bottom: 1px dotted #ddd; line-height: 18px; }
td.nm { text-align: right; padding-right: 6px; }
td > svg, td > i { margin: 0 auto; }
.sel { background: #0078d7; color: #fff; }
.ck { width: 14px; height: 12px; }
.bu { width: 10px; height: 14px; }
.lo { width: 13px; height: 14px; }
.sw, .mt { display: block; width: 12px; height: 12px; border: 1px solid #111; }
.mt { width: 15px; height: 15px; border-radius: 8px; border-color: #eee; background: #f9f9f9; }
td > .mt { margin-left: 3px; }
.sel .mt { background: #fff; }
.k { background: #000; } .r { background: #c80000; } .p { background: #7d26cd; } .b { background: #00f; } .g { background: #007f00; } .w { background: #fff; } .n { background: #ffc0cb; } .y { background: #ff0; }
.sel .sw { border-color: #fff; }
.hscroll { display: flex; justify-content: space-between; height: 15px; background: #f0f0f0; margin: 0 3px 4px 0; }
.hscroll i { width: 119px; background: #cdcdcd; }

.osnap { display: flex; gap: 7px; height: 29px; padding: 3px 0 0 3px; align-items: center; border-top: 1px solid #d5d9e4; }
.osnap label { display: flex; align-items: center; gap: 4px; }
.osnap input { appearance: none; width: 13px; height: 13px; border: 1px solid #333; background: #fff; }
.osnap input:checked::after { content: ""; display: block; width: 9px; height: 5px; margin: 1px; border: solid #333; border-width: 0 0 1px 1px; transform: rotate(-45deg); }
.history { display: flex; height: 56px; background: #fff; border-top: 1px solid #d5d9e4; border-bottom: 1px solid #bcc3d6; overflow: hidden; }
.lines { flex: 1; display: flex; flex-direction: column; justify-content: flex-end; padding-left: 2px; }
.lines p { height: 15px; line-height: 16px; }
.hbar { width: 16px; background: #f0f0f0; display: flex; flex-direction: column; justify-content: space-between; margin-right: 1px; padding-top: 3px; }
.hbar i { height: 17px; background: #cdcdcd; }
.prompt { display: flex; height: 18px; background: #fff; padding-left: 2px; font-weight: 700; line-height: 18px; }
.prompt input { flex: 1; }
.spin { display: flex; flex-direction: column; width: 15px; height: 17px; gap: 1px; margin: 1px 2px 1px 0; }
.spin button { flex: 1; background: #f0f0f0; border: 1px solid #aaa; border-width: 0 1px 1px 0; display: grid; place-items: center; }
.spin button::after { content: ""; border: 3px solid transparent; border-top: 0; border-bottom-color: #000; }
.spin button:last-child::after { border-bottom: 0; border-top: 3px solid #000; }
.status { display: flex; height: 24px; border-top: 4px solid #e9ebf0; box-shadow: inset 0 1px #bcc3d6; line-height: 20px; white-space: nowrap; }
.status > * { border-right: 1px solid #bcc3d6; text-align: center; }
.c1 { width: 138px; padding-left: 5px; }
.status .c1 { text-align: left; }
.c2 { width: 88px; }
.c3 { width: 168px; display: flex; gap: 2px; padding: 3px 0 0 3px; line-height: 14px; }
.c3 i { width: 14px; height: 14px; background: #000; }
.status button { padding: 0 6px; }
.status .wide { padding: 0 7px; }
.status button.on { font-weight: 700; background: #e0effb; padding: 0 6px 0 5px; }
.status .c4 { flex: 1; text-align: left; padding-left: 2px; margin-right: 7px; }
.taskbar { display: flex; position: relative; z-index: 5; height: 30px; background: #101010; color: #fff; }
.start { width: 36px; display: grid; place-items: center; }
.apps { display: flex; margin-left: 519px; gap: 1px; }
.apps button { width: 36px; display: grid; place-items: center; border-bottom: 2px solid #76b9ed; background-clip: padding-box; }
.apps button.on { background: #3a3a3a; }
.apps button.idle { border-color: transparent; }
.apps svg { width: 18px; height: 18px; }
.tray { margin-left: auto; display: flex; align-items: center; gap: 6px; padding-right: 24px; }
.tray svg { width: 18px; height: 18px; }
.clock { width: 52px; line-height: 14px; text-align: center; white-space: nowrap; }
.tray .note { margin-left: 12px; }

.mini { position: absolute; left: 7px; bottom: 30px; width: 146px; height: 29px; background: #fff; border: 1px solid #aaa; border-bottom: 0; display: flex; justify-content: space-between; padding: 7px 17px 0 24px; color: #888; box-shadow: 0 0 10px rgba(0,0,0,.3); }

.win { position: absolute; background: #f0f0f0; border: 1px solid #999; display: flex; flex-direction: column; }
.wtitle { display: flex; align-items: center; height: 30px; background: #fff; padding: 0 9px 0 8px; }
.wtitle.dim { color: #999; }
.wtitle h2 { flex: 1; margin-left: 5px; }
.options { left: 280px; right: 125px; top: 27px; bottom: 64px; box-shadow: 0 4px 14px rgba(0,0,0,.4); }
.obody { flex: 1; min-height: 0; display: flex; gap: 8px; padding: 17px 13px 0 12px; }
.tree { width: 229px; border: 1px solid #828790; background: #fff; display: flex; }
.tree ul { flex: 1; display: flex; flex-direction: column; padding: 1px 0 1px 22px; }
.tree li { height: 18px; line-height: 18px; }
.tree .exp { display: flex; align-items: center; margin-left: -18px; gap: 2px; }
.tree .last { margin: auto 0 0 48px; }
.vbar { width: 16px; background: #f0f0f0; display: flex; flex-direction: column; justify-content: space-between; margin: 1px; }
.vbar i { flex: none; background: #cdcdcd; }
.pane { flex: 1; min-width: 0; display: flex; border-bottom: 1px solid #a0a0a0; padding: 9px 14px 14px 16px; }
.form { flex: 1; min-width: 0; }
.wide.vbar { border-left: 1px solid #fff; margin: 0 0 0 2px; }
.wide i { height: 374px; margin: 1px 0 auto; }
.sec { display: flex; align-items: center; gap: 4px; height: 20px; }
.sec::after { content: ""; flex: 1; border-top: 1px solid #bbb; }
.sec.big { margin: 3px 0; font-size: 12px; }
.sec.sub { margin: 4px 0 3px; gap: 1px; }
.sec.sub h3 { font-size: 12px; }
.row { display: grid; grid-template-columns: 325px 1fr; height: 20px; align-items: center; }
.row label { padding-left: 19px; line-height: 20px; }
.row input, .combo select { background: #fff; height: 20px; width: 100%; }
.row.name input { padding-left: 4px; }
.combo, .num { display: flex; background: #fff; }
.combo select { appearance: none; flex: 1; padding-left: 3px; }
.combo > span { width: 20px; height: 20px; display: grid; place-items: center; background: #e3e3e3; border: 1px solid #aaa; border-width: 1px 0 0 1px; }
.row.color { margin-top: 1px; }
.color button { height: 19px; background: #9f9f9f; border: 1px solid #aaa; box-shadow: inset 0 0 0 2px #e3e3e3; }
hr { border: 0; border-top: 1px solid #bbb; margin: 0; height: 0; }
.h1 { margin-top: 13px; }
.h2 { margin-top: 256px; margin-bottom: 13px; }
.spinrow { margin-bottom: 1px; }
.num input { flex: 1; padding-left: 4px; }
.h3 { margin-top: 12px; }
.h4 { margin: 67px 0 13px; }
.ofoot { display: flex; justify-content: flex-end; gap: 5px; padding: 10px 13px 14px 0; }
.btn { width: 86px; height: 24px; background: #e1e1e1; border: 1px solid #adadad; }
.btn.restore { width: 210px; margin-right: 49px; }
.btn.def { border: 2px solid #1a72b8; }
.btn.hot { background: #e5f1fb; border-color: #1a72b8; }
.grip { position: absolute; right: 0; bottom: 0; width: 12px; height: 12px; }

.picker { left: 283px; top: 145px; border-color: #666; box-shadow: 0 3px 16px rgba(0,0,0,.45); }
.pbody { display: flex; gap: 13px; padding: 13px 7px 11px 12px; }
.list { width: 161px; height: 420px; border: 1px solid #828790; background: #fff; display: flex; overflow: hidden; }
.list ul { flex: 1; padding: 1px 0 0 1px; }
.list li { display: flex; height: 16px; line-height: 16px; }
.list li i { width: 16px; border: 1px solid #000; border-width: 0 1px 1px 0; }
.list li span { flex: 1; padding-left: 2px; }
.list li[aria-selected] i { border-width: 1px; }
.list li[aria-selected] span { background: #0078d7; color: #fff; border: 1px solid #dc8b3c; line-height: 14px; padding-left: 1px; }
.list .vbar { margin-left: 2px; }
.list .vbar i { height: 68px; margin-bottom: auto; }
.wheelbox { position: relative; width: 313px; height: 300px; background: #000; display: grid; place-items: center; }
.wheel { width: 298px; height: 298px; border-radius: 50%; background: conic-gradient(from 90deg, #f00, #f0f, #00f, #0ff, #0f0, #ff0, #f00); display: grid; place-items: center; }
.hole { width: 228px; height: 228px; border-radius: 50%; background: #000; display: grid; place-items: center; }
.sv { width: 154px; height: 154px; background: linear-gradient(to bottom, transparent, #000), linear-gradient(to right, #f00, #fff); }
.marks { position: absolute; inset: 0; }
.vals { display: flex; gap: 16px; padding-top: 11px; }
.preview { width: 129px; height: 71px; background: #fff; border: 1px solid #777; border-bottom-color: #fff; }
.preview i { display: block; width: 63px; height: 70px; background: #9f9f9f; border-bottom: 1px solid #777; }
.hsv { display: grid; grid-template-columns: 33px 49px 25px 33px; row-gap: 1px; align-items: center; }
.hsv input { width: 33px; height: 23px; border: 1px solid #7a7a7a; background: #fff; padding: 0 0 2px 5px; }
.pfoot { display: flex; gap: 7px; padding: 37px 0 0 107px; }

.ink { position: absolute; inset: 0; width: 100%; height: 100%; z-index: 9; pointer-events: none; fill: none; stroke: #b01863; stroke-width: 6; stroke-linecap: round; stroke-linejoin: round; }
```
